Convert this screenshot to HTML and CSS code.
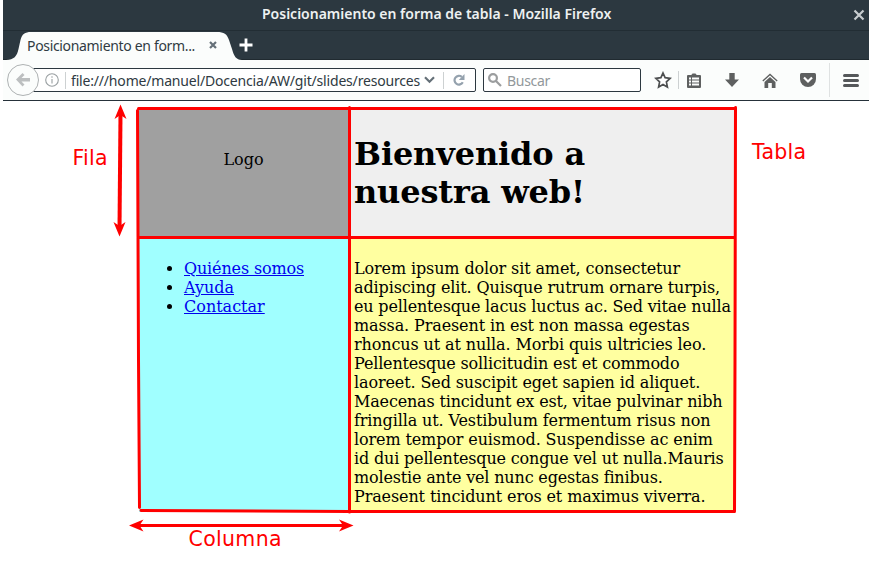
FILE: index.html
```html
<!DOCTYPE html>
<html lang="es">
<head>
<meta charset="utf-8">
<title>Posicionamiento en forma de tabla</title>
<link rel="stylesheet" href="styles.css">
</head>
<body>
<div class="browser">
  <header class="titlebar">
    <span class="window-title">Posicionamiento en forma de tabla - Mozilla Firefox</span>
    <svg class="window-close" width="12" height="12" viewBox="0 0 12 12"><path d="M1.500 1.500l9 9M10.500 1.500l-9 9"/></svg>
  </header>
  <div class="tabstrip">
    <div class="tab">
      <svg class="tab-shape" width="236" height="29" viewBox="0 0 236 29"><path d="M0 29C8 29 11 25 12.500 18L14.500 9C16 3 19 1 25 1H211C218 1 221 3 223 9L226 18C228 25 230 29 236 29Z"/></svg>
      <span class="tab-label">Posicionamiento en form...</span>
      <svg class="tab-close" width="8" height="8" viewBox="0 0 8 8"><path d="M1 1l6 6M7 1l-6 6"/></svg>
    </div>
    <svg class="tab-new" width="14" height="14" viewBox="0 0 14 14"><path d="M7 .5v13M.5 7h13"/></svg>
  </div>
  <nav class="toolbar">
    <div class="urlbar">
      <svg class="back" width="34" height="34" viewBox="0 0 34 34"><circle cx="17" cy="17" r="15.500"/><path d="M10 16.500l6.500-6.500 2 2-3 3H24v3.500h-8.500l3 3-2 2z"/></svg>
      <svg class="info" width="14" height="14" viewBox="0 0 14 14"><circle cx="7" cy="7" r="6.300"/><path d="M7 6v4.500M7 3.300v1.500"/></svg>
      <i class="sep"></i>
      <span class="url">file:///home/manuel/Docencia/AW/git/slides/resources</span>
      <svg class="chevron" width="11" height="8" viewBox="0 0 11 8"><path d="M1 1.300l4.500 4.400L10 1.300"/></svg>
      <i class="sep"></i>
      <svg class="reload" width="12" height="12" viewBox="0 0 12 12"><path class="arc" d="M8.800 2.800A4.400 4.400 0 1 0 9.800 8.300"/><path class="tip" d="M11.500 0V6H5.800z"/></svg>
    </div>
    <div class="search">
      <svg width="14" height="14" viewBox="0 0 14 14"><circle cx="5" cy="5" r="3.900"/><path d="M8 8l5 5"/></svg>
      <span>Buscar</span>
    </div>
    <div class="buttons">
      <svg class="star" width="18" height="18" viewBox="0 0 18 18"><path d="M9 2l2.100 4.700 5.100.6-3.800 3.500 1 5.200L9 13.400 4.600 16l1-5.200L1.800 7.300l5.100-.6z"/></svg>
      <i class="sep"></i>
      <svg class="clip" width="14" height="15" viewBox="0 0 14 15"><path fill-rule="evenodd" d="M0 3q0-1 1-1h3Q5 1.500 5.500.5h3Q9 1.500 10 2h3q1 0 1 1v11q0 1-1 1H1q-1 0-1-1zM2 4.500v2h2v-2zm3 0v2h7v-2zM2 7.500v2h2v-2zm3 0v2h7v-2zm-3 3v2h2v-2zm3 0v2h7v-2z"/></svg>
      <svg class="down" width="14" height="14" viewBox="0 0 14 14"><path d="M4.300 0h5.400v6.500H14L7 14 0 6.500h4.300z"/></svg>
      <svg class="home" width="16" height="15" viewBox="0 0 16 15"><path d="M2.500 9L8 4l5.500 5v6H9.800v-5H6.200v5H2.500z"/><path class="roof" d="M.8 8L8 1.500 15.200 8"/></svg>
      <svg class="pocket" width="16" height="14" viewBox="0 0 16 14"><path d="M1.500 0h13Q16 0 16 1.500V6a8 8 0 0 1-16 0V1.500Q0 0 1.500 0z"/><path class="check" d="M4 4.500l4 4 4-4"/></svg>
      <i class="sep tall"></i>
      <svg class="menu" width="16" height="13" viewBox="0 0 16 13"><path d="M1.500 1.500h13M1.500 6.500h13M1.500 11.500h13"/></svg>
    </div>
  </nav>
</div>

<main class="page">
  <div class="cell logo">Logo</div>
  <div class="cell head"><h1>Bienvenido a<br>nuestra web!</h1></div>
  <div class="cell links">
    <ul>
      <li><a class="first" href="#">Quiénes somos</a></li>
      <li><a href="#">Ayuda</a></li>
      <li><a href="#">Contactar</a></li>
    </ul>
  </div>
  <div class="cell content">Lorem ipsum dolor sit amet, consectetur<br>adipiscing elit. Quisque rutrum ornare turpis,<br><span class="tight">eu pellentesque lacus luctus ac. Sed vitae nulla</span><br>massa. Praesent in est non massa egestas<br>rhoncus ut at nulla. Morbi quis ultricies leo.<br><span class="tight">Pellentesque sollicitudin est et commodo</span><br>laoreet. Sed suscipit eget sapien id aliquet.<br><span class="tight">Maecenas tincidunt ex est, vitae pulvinar nibh</span><br>fringilla ut. Vestibulum fermentum risus non<br>lorem tempor euismod. Suspendisse ac enim<br><span class="tight">id dui pellentesque congue vel ut nulla.Mauris</span><br><span class="tight">molestie ante vel nunc egestas finibus.</span><br>Praesent tincidunt eros et maximus viverra.</div>
</main>

<svg class="annotations" width="869" height="562" viewBox="0 0 869 562">
  <g class="rules">
    <path d="M138.500 108.500H735.500M138 237.500H735M141 510.500L350 511.500 734.500 511.500M137.500 110.500L138.500 360 139.500 507.500M349.500 107.500V512M735.500 107.500L735 360 734.500 511"/>
  </g>
  <path class="shaft" d="M120.500 114L119.500 228"/>
  <path class="shaft thin" d="M138 525.500H345"/>
  <g class="tips">
    <path d="M120.500 104.500L126.500 119 120.500 115 114.500 119z"/>
    <path d="M119.500 236.500L125.500 222 119.500 226 113.500 222z"/>
    <path d="M129 525.500L143.500 519.500 139.500 525.500 143.500 531.500z"/>
    <path d="M353.500 525.500L339 519.500 343 525.500 339 531.500z"/>
  </g>
  <text x="72.500" y="165" textLength="35">Fila</text>
  <text x="752" y="159" textLength="54">Tabla</text>
  <text x="188.500" y="546" textLength="93">Columna</text>
</svg>
</body>
</html>
```
FILE: styles.css
```css
* { box-sizing: border-box; }
body {
  margin: 0;
  width: 869px;
  height: 562px;
  overflow: hidden;
  background: #fff;
  font: 16px/19px "DejaVu Serif", serif;
  color: #000;
}
svg { display: block; flex: none; fill: none; }
.browser {
  margin-left: 3px;
  height: 101px;
  font-family: "Noto Sans", "Open Sans", sans-serif;
  border-bottom: 1px solid #26313a;
  background: #fbfdfc;
}
.titlebar {
  height: 31px;
  display: flex;
  align-items: center;
  padding: 0 4px 2px 259px;
  background: #2c3840;
  border-bottom: 1px solid #222d34;
}
.window-title { margin-bottom: 1px; font-size: 14px; font-weight: 600; color: #eef1f1; white-space: nowrap; }
.window-close { margin-left: auto; margin-top: 2px; stroke: #c8cccf; stroke-width: 2.2; }
.tabstrip {
  height: 29px;
  display: flex;
  align-items: center;
  background: #2c3840;
  border-bottom: 1px solid #202a30;
}
.tab { display: flex; align-items: center; width: 236px; height: 29px; margin-left: 3px; }
.tab-shape { margin-right: -236px; fill: #fbfdfc; }
.tab-label { position: relative; margin-left: 21px; width: 182px; font-size: 14px; letter-spacing: -.33px; color: #303b43; white-space: nowrap; }
.tab-close { position: relative; stroke: #657078; stroke-width: 2.2; }
.tab-new { margin-left: -3px; stroke: #fff; stroke-width: 2.8; }
.toolbar { display: flex; align-items: center; height: 40px; padding-left: 4px; }
.urlbar {
  display: flex;
  align-items: center;
  width: 456px;
  height: 24px;
  margin-left: 13px;
  border: 1px solid #2c3840;
  border-radius: 2px;
  background: #fff;
}
.back { margin-left: -15px; fill: #bcbfc0; }
.back circle { fill: #fbfdfc; stroke: #aeb2b3; }
.info { margin-left: 5px; stroke: #999fa1; stroke-width: 1.1; }
.sep { flex: none; width: 1px; height: 17px; background: #cdd1d2; }
.info + .sep { margin-left: 6px; }
.url { margin-left: 5px; width: 349px; white-space: nowrap; font-size: 14px; letter-spacing: -.18px; color: #2f3a42; }
.chevron { margin-left: 4px; stroke: #657078; stroke-width: 2.2; }
.chevron + .sep { margin-left: 8px; }
.reload { margin-left: 9px; }
.arc { stroke: #94a1ad; stroke-width: 2.2; }
.tip { fill: #94a1ad; }
.search {
  display: flex;
  align-items: center;
  width: 158px;
  height: 24px;
  margin-left: 7px;
  padding-left: 4px;
  border: 1px solid #2c3840;
  border-radius: 2px;
  background: #fff;
  font-size: 14px;
  letter-spacing: -.3px;
  color: #92989b;
}
.search svg { stroke: #9b9d9e; stroke-width: 2.2; }
.search span { margin-left: 5px; }
.buttons { display: flex; align-items: center; height: 40px; }
.buttons svg { fill: #5e6060; }
.buttons .star { margin-left: 13px; fill: #fff; stroke: #4d4f50; stroke-width: 1.7; }
.buttons .sep { margin-left: 6px; height: 18px; }
.clip { margin-left: 8px; }
.down { margin-left: 24px; }
.home { margin-left: 23px; }
.buttons .roof { fill: none; stroke: #5e6060; stroke-width: 1.3; }
.pocket { margin-left: 22px; }
.buttons .check { fill: none; stroke: #fff; stroke-width: 2.2; }
.buttons .tall { margin-left: 13px; height: 34px; background: #dfe2e2; }
.menu { margin-left: 13px; stroke: #55585a; stroke-width: 3; stroke-linecap: round; }
.page {
  display: grid;
  grid-template-columns: 211px 385px;
  grid-template-rows: 129px 274px;
  width: 596px;
  margin: 8px 0 0 139px;
}
.logo { padding-top: 41px; padding-right: 2px; text-align: center; background: #a0a0a0; }
.head { padding: 26px 0 0 4px; background: #efefef; }
h1 { margin: 0; font-size: 32px; line-height: 38px; letter-spacing: -.15px; }
.links { padding-top: 21px; background: #a0ffff; }
.links ul { margin: 0; padding-left: 45px; }
.links a { color: #0000ee; }
.links .first { letter-spacing: -.15px; }
.content { padding: 21px 0 0 4px; white-space: nowrap; letter-spacing: -.115px; background: #ffffa0; }
.tight { letter-spacing: -.168px; }
.annotations { position: absolute; left: 0; top: 0; pointer-events: none; }
.rules { stroke: #f00; stroke-width: 3; stroke-linecap: round; }
.shaft { stroke: #f00; stroke-width: 4; }
.thin { stroke-width: 3; }
.tips, .annotations text { fill: #f00; }
.annotations text { font: 20.500px "DejaVu Sans", sans-serif; }
```
